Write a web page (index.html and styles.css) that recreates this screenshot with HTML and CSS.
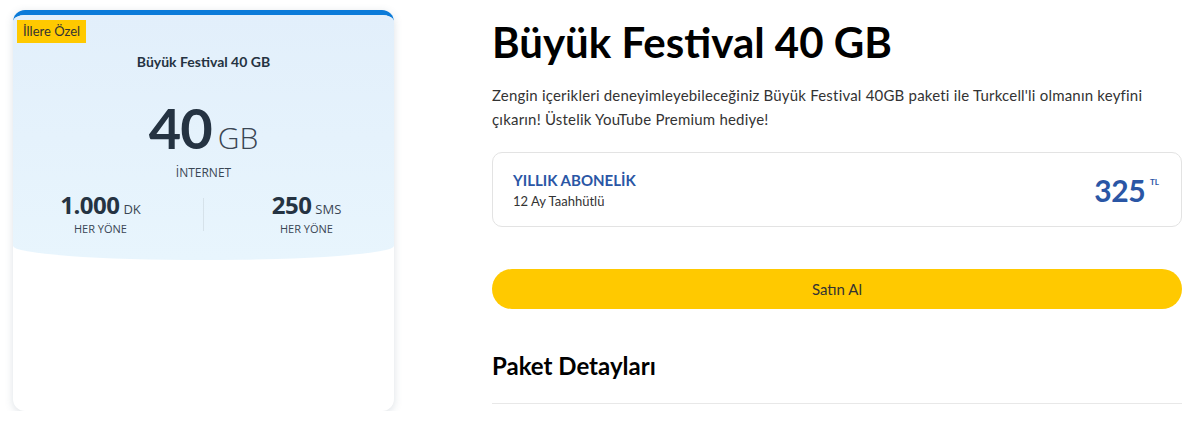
FILE: index.html
```html
<!DOCTYPE html>
<html lang="tr">
<head>
<meta charset="utf-8">
<title>Büyük Festival 40 GB</title>
<link rel="stylesheet" href="styles.css">
</head>
<body>
<div class="page">
  <div class="card">
    <div class="card-top">
      <span class="badge">İllere Özel</span>
      <div class="card-title">Büyük Festival 40 GB</div>
      <div class="data"><span class="data-num">40</span><span class="data-unit">GB</span></div>
      <div class="data-label">İNTERNET</div>
      <div class="stats">
        <div class="stat">
          <div class="stat-val"><span class="stat-num">1.000</span><span class="stat-unit">DK</span></div>
          <div class="stat-label">HER YÖNE</div>
        </div>
        <div class="stat-sep"></div>
        <div class="stat">
          <div class="stat-val"><span class="stat-num">250</span><span class="stat-unit">SMS</span></div>
          <div class="stat-label">HER YÖNE</div>
        </div>
      </div>
    </div>
  </div>
  <div class="detail">
    <h1 class="title">Büyük Festival 40 GB</h1>
    <p class="desc">Zengin içerikleri deneyimleyebileceğiniz Büyük Festival 40GB paketi ile Turkcell'li olmanın keyfini çıkarın! Üstelik YouTube Premium hediye!</p>
    <div class="plan">
      <div class="plan-info">
        <div class="plan-name">YILLIK ABONELİK</div>
        <div class="plan-sub">12 Ay Taahhütlü</div>
      </div>
      <div class="price"><span class="price-num">325</span><span class="price-cur">TL</span></div>
    </div>
    <button class="buy">Satın Al</button>
    <h2 class="section">Paket Detayları</h2>
    <div class="rule"></div>
  </div>
</div>
</body>
</html>
```
FILE: styles.css
```css
* { box-sizing: border-box; }
html, body { margin: 0; padding: 0; background: #fff; }
body { font-family: "Lato", "Noto Sans", sans-serif; color: #333; }
.page {
  display: flex;
  align-items: flex-start;
  padding: 10px 0 0 13px;
  gap: 98px;
}
.card {
  width: 381px;
  height: 401px;
  border-radius: 12px;
  border-top: 5px solid #0b7bd9;
  background: #fff;
  box-shadow: 0 2px 8px rgba(60, 90, 110, 0.18);
  overflow: hidden;
  flex: none;
}
.card-top {
  height: 245px;
  background: linear-gradient(180deg, #e2effb 0%, #e8f5fd 100%);
  border-radius: 0 0 50% 50% / 0 0 14px 14px;
  padding: 5px 4px 0;
  display: flex;
  flex-direction: column;
  align-items: center;
  font-family: "Open Sans", sans-serif;
  color: #253342;
}
.badge {
  align-self: flex-start;
  background: #ffc900;
  color: #333;
  font-family: "Lato", sans-serif;
  font-size: 13px;
  height: 23px;
  line-height: 23px;
  padding: 0 6px;
}
.card-title {
  font-family: "Lato", sans-serif;
  font-weight: 700;
  font-size: 14px;
  margin-top: 10px;
  line-height: 18px;
}
.data { margin-top: 29px; display: flex; align-items: baseline; line-height: 1; }
.data-num { font-family: "Lato", sans-serif; font-size: 56px; font-weight: 700; letter-spacing: -1px; }
.data-unit { font-size: 30px; font-weight: 300; margin-left: 6px; color: #3a4654; }
.data-label { font-size: 12px; margin-top: 8px; color: #3a4654; }
.stats { display: flex; align-items: center; justify-content: center; width: 100%; margin-top: 12px; }
.stat { flex: none; width: 205px; display: flex; flex-direction: column; align-items: center; }
.stat-val { display: flex; align-items: baseline; line-height: 1; }
.stat-num { font-size: 24px; font-weight: 700; letter-spacing: -0.5px; }
.stat-unit { font-size: 13px; margin-left: 4px; color: #3a4654; }
.stat-label { font-size: 11px; margin-top: 4px; color: #3a4654; }
.stat-sep { flex: none; width: 1px; height: 33px; background: #d6e2ea; }
.detail { width: 690px; flex: none; }
.title {
  margin: 4px 0 0;
  font-size: 42px;
  font-weight: 700;
  color: #000;
  line-height: 56px;
}
.desc { margin: 13px 0 0; font-size: 15px; line-height: 24px; color: #333; letter-spacing: 0.2px; }
.plan {
  margin-top: 21px;
  height: 75px;
  border: 1px solid #e3e3e3;
  border-radius: 10px;
  display: flex;
  align-items: center;
  justify-content: space-between;
  padding: 0 22px 0 20px;
}
.plan-name { font-size: 15px; font-weight: 700; color: #2a56a5; line-height: 20px; }
.plan-sub { font-size: 13px; color: #333; line-height: 18px; margin-top: 2px; }
.price { display: flex; align-items: flex-start; color: #2a56a5; font-weight: 700; }
.price-num { font-size: 30px; line-height: 1; letter-spacing: -0.5px; }
.price-cur { font-size: 8px; margin-left: 5px; margin-top: 2px; }
.buy {
  display: block;
  width: 100%;
  height: 40px;
  margin-top: 42px;
  border: 0;
  border-radius: 20px;
  background: #ffc900;
  color: #333;
  font-family: "Lato", sans-serif;
  font-size: 15px;
}
.section { margin: 42px 0 0; font-size: 24px; font-weight: 700; color: #000; line-height: 30px; }
.rule { margin-top: 22px; height: 1px; background: #e8e8e8; }
```
